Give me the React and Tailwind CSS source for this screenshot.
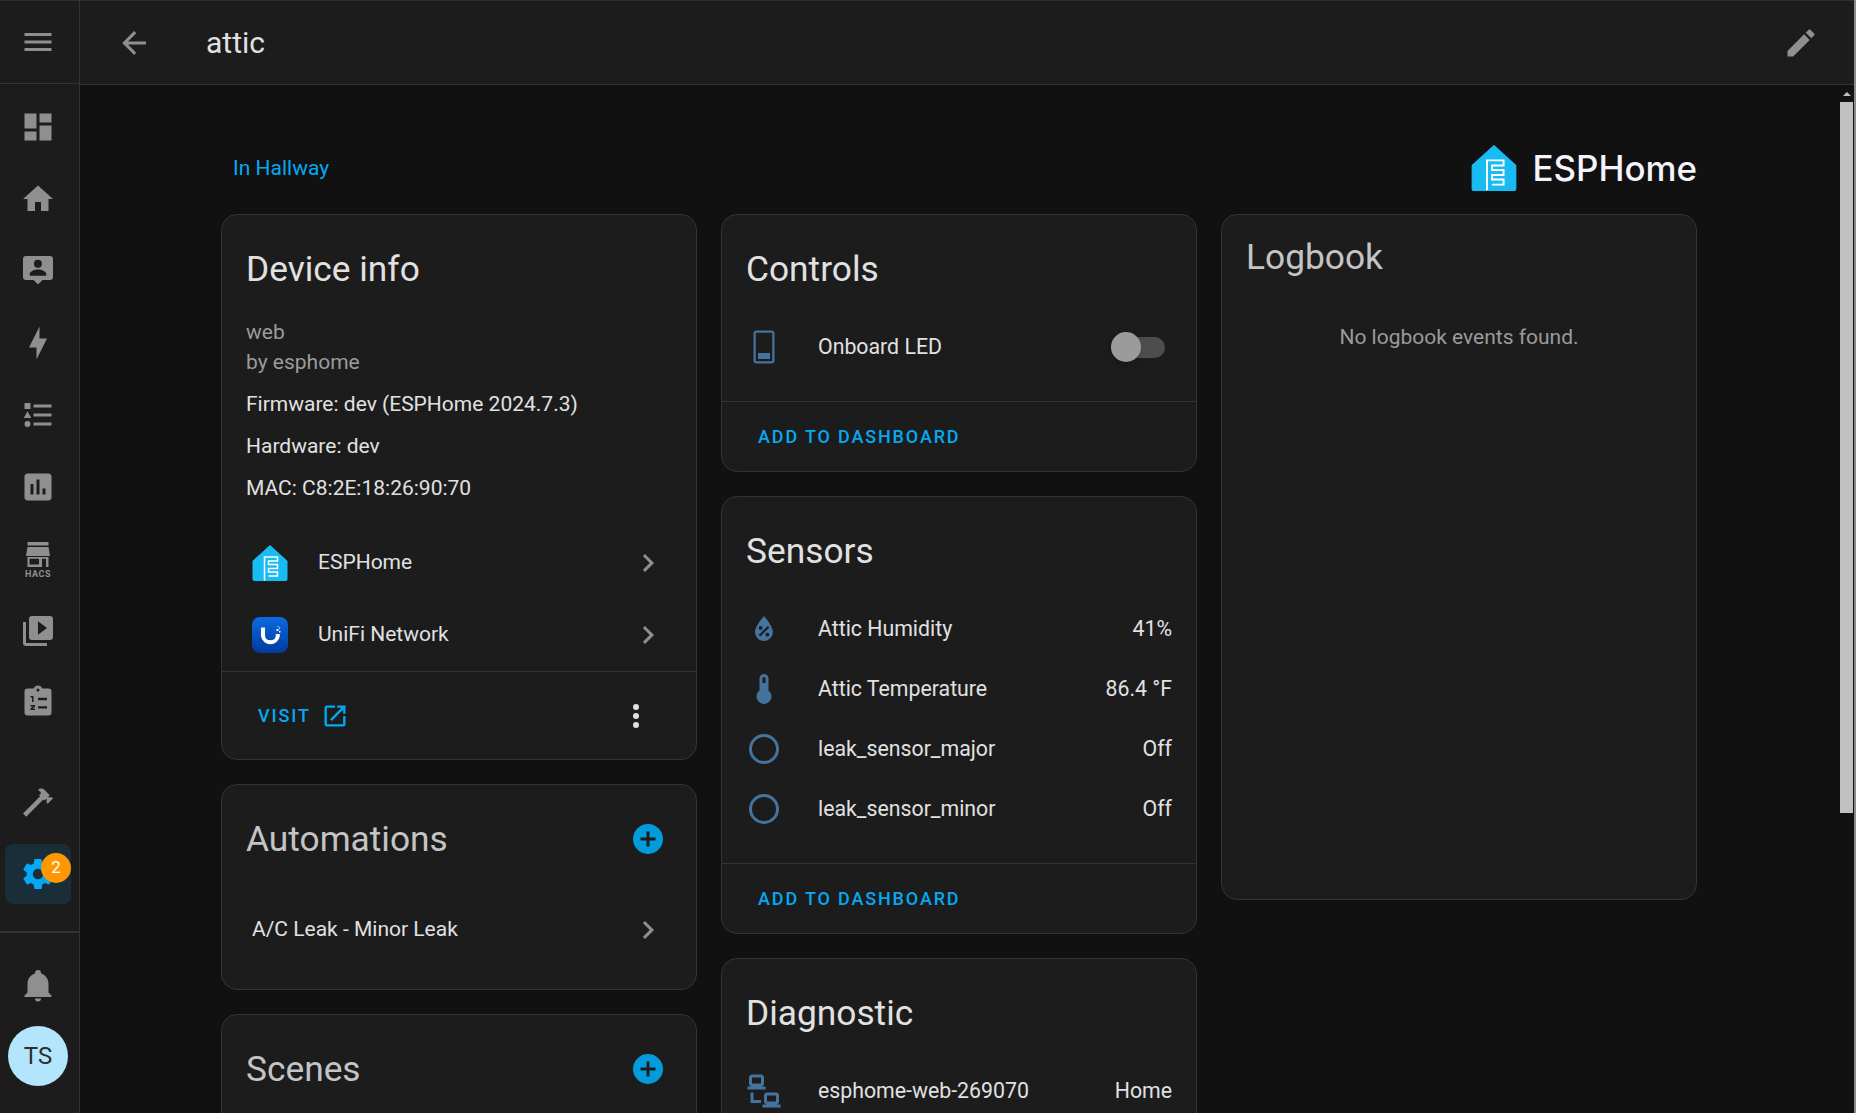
const P = {
  menu: "M3,6H21V8H3V6M3,11H21V13H3V11M3,16H21V18H3V16Z",
  back: "M20,11V13H8L13.5,18.5L12.08,19.92L4.16,12L12.08,4.08L13.5,5.5L8,11H20Z",
  pencil: "M20.71,7.04C21.1,6.65 21.1,6 20.71,5.63L18.37,3.29C18,2.9 17.35,2.9 16.96,3.29L15.12,5.12L18.87,8.87M3,17.25V21H6.75L17.81,9.93L14.06,6.18L3,17.25Z",
  dashboard: "M13,3V9H21V3M13,21H21V11H13M3,21H11V15H3M3,13H11V3H3V13Z",
  home: "M10,20V14H14V20H19V12H22L12,3L2,12H5V20H10Z",
  person: "M4,2H20A2,2 0 0,1 22,4V16A2,2 0 0,1 20,18H15L12,21L9,18H4A2,2 0 0,1 2,16V4A2,2 0 0,1 4,2M12,4.5A2.7,2.7 0 0,0 9.3,7.2A2.7,2.7 0 0,0 12,9.9A2.7,2.7 0 0,0 14.6,7.2A2.7,2.7 0 0,0 12,4.5M12,11C9.6,11 6.5,12.2 6.5,14V15.2H17.5V14C17.5,12.2 14.4,11 12,11Z",
  bolt: "M11 15H6L13 1V9H18L11 23V15Z",
  list: "M5,9.5L7.5,14H2.5L5,9.5M3,4H7V8H3V4M5,20A2,2 0 0,0 7,18A2,2 0 0,0 5,16A2,2 0 0,0 3,18A2,2 0 0,0 5,20M9,5V7H21V5H9M9,19H21V17H9V19M9,13H21V11H9V13Z",
  chart: "M19 3H5C3.9 3 3 3.9 3 5V19C3 20.1 3.9 21 5 21H19C20.1 21 21 20.1 21 19V5C21 3.9 20.1 3 19 3M9 17H7V10H9V17M13 17H11V7H13V17M17 17H15V13H17V17Z",
  media: "M4,6H2V20A2,2 0 0,0 4,22H18V20H4V6M20,2H8A2,2 0 0,0 6,4V16A2,2 0 0,0 8,18H20A2,2 0 0,0 22,16V4A2,2 0 0,0 20,2M12,14.5V5.5L18,10L12,14.5Z",
  todo: "M19,3H14.82C14.4,1.84 13.3,1 12,1C10.7,1 9.6,1.84 9.18,3H5A2,2 0 0,0 3,5V19A2,2 0 0,0 5,21H19A2,2 0 0,0 21,19V5A2,2 0 0,0 19,3M12,3A1,1 0 0,1 13,4A1,1 0 0,1 12,5A1,1 0 0,1 11,4A1,1 0 0,1 12,3M7,8H9V12H8V9H7V8M7,14H10V15.2L8.2,16.4H10V17.4H7V16.2L8.8,15H7V14M12,9.2H18V10.8H12V9.2M12,14.8H18V16.4H12V14.8Z",
  hammer: "M2 19.63L13.43 8.2L12.72 7.5L14.14 6.07L12 3.89C13.2 2.7 15.09 2.7 16.27 3.89L19.87 7.5L18.45 8.91H21.29L22 9.62L18.45 13.21L17.74 12.5V9.62L16.27 11.04L15.56 10.33L4.13 21.76L2 19.63Z",
  cog: "M12,15.5A3.5,3.5 0 0,1 8.5,12A3.5,3.5 0 0,1 12,8.5A3.5,3.5 0 0,1 15.5,12A3.5,3.5 0 0,1 12,15.5M19.43,12.97C19.47,12.65 19.5,12.33 19.5,12C19.5,11.67 19.47,11.34 19.43,11L21.54,9.37C21.73,9.22 21.78,8.95 21.66,8.73L19.66,5.27C19.54,5.05 19.27,4.96 19.05,5.05L16.56,6.05C16.04,5.66 15.5,5.32 14.87,5.07L14.5,2.42C14.46,2.18 14.25,2 14,2H10C9.75,2 9.54,2.18 9.5,2.42L9.13,5.07C8.5,5.32 7.96,5.66 7.44,6.05L4.95,5.05C4.73,4.96 4.46,5.05 4.34,5.27L2.34,8.73C2.21,8.95 2.27,9.22 2.46,9.37L4.57,11C4.53,11.34 4.5,11.67 4.5,12C4.5,12.33 4.53,12.65 4.57,12.97L2.46,14.63C2.27,14.78 2.21,15.05 2.34,15.27L4.34,18.73C4.46,18.95 4.73,19.03 4.95,18.95L7.44,17.94C7.96,18.34 8.5,18.68 9.13,18.93L9.5,21.58C9.54,21.82 9.75,22 10,22H14C14.25,22 14.46,21.82 14.5,21.58L14.87,18.93C15.5,18.67 16.04,18.34 16.56,17.94L19.05,18.95C19.27,19.03 19.54,18.95 19.66,18.73L21.66,15.27C21.78,15.05 21.73,14.78 21.54,14.63L19.43,12.97Z",
  bell: "M21,19V20H3V19L5,17V11C5,7.9 7.03,5.17 10,4.29C10,4.19 10,4.1 10,4A2,2 0 0,1 12,2A2,2 0 0,1 14,4C14,4.1 14,4.19 14,4.29C16.97,5.17 19,7.9 19,11V17L21,19M14,21A2,2 0 0,1 12,23A2,2 0 0,1 10,21",
  chevron: "M8.59,16.58L13.17,12L8.59,7.41L10,6L16,12L10,18L8.59,16.58Z",
  open: "M14,3V5H17.59L7.76,14.83L9.17,16.24L19,6.41V10H21V3M19,19H5V5H12V3H5C3.89,3 3,3.9 3,5V19A2,2 0 0,0 5,21H19A2,2 0 0,0 21,19V12H19V19Z",
  dots: "M12,16A2,2 0 0,1 14,18A2,2 0 0,1 12,20A2,2 0 0,1 10,18A2,2 0 0,1 12,16M12,10A2,2 0 0,1 14,12A2,2 0 0,1 12,14A2,2 0 0,1 10,12A2,2 0 0,1 12,10M12,4A2,2 0 0,1 14,6A2,2 0 0,1 12,8A2,2 0 0,1 10,6A2,2 0 0,1 12,4Z",
  plus: "M17,13H13V17H11V13H7V11H11V7H13V11H17M12,2A10,10 0 0,0 2,12A10,10 0 0,0 12,22A10,10 0 0,0 22,12A10,10 0 0,0 12,2Z",
  led: "M7,1H17A2,2 0 0,1 19,3V21A2,2 0 0,1 17,23H7A2,2 0 0,1 5,21V3A2,2 0 0,1 7,1M6.5,2.5V21.5H17.5V2.5H6.5M8,16H16V20H8V16Z",
  water: "M12,3.25C12,3.25 6,10 6,14C6,17.32 8.69,20 12,20A6,6 0 0,0 18,14C18,10 12,3.25 12,3.25M14.47,9.97L15.53,11.03L9.53,17.03L8.47,15.97M9.75,10A1.25,1.25 0 0,1 11,11.25A1.25,1.25 0 0,1 9.75,12.5A1.25,1.25 0 0,1 8.5,11.25A1.25,1.25 0 0,1 9.75,10M14.25,14.5A1.25,1.25 0 0,1 15.5,15.75A1.25,1.25 0 0,1 14.25,17A1.25,1.25 0 0,1 13,15.75A1.25,1.25 0 0,1 14.25,14.5Z",
  thermo: "M15 13V5A3 3 0 0 0 9 5V13A5 5 0 1 0 15 13M12 4A1 1 0 0 1 13 5V8H11V5A1 1 0 0 1 12 4Z",
  circle: "M12,20A8,8 0 0,1 4,12A8,8 0 0,1 12,4A8,8 0 0,1 20,12A8,8 0 0,1 12,20M12,2A10,10 0 0,0 2,12A10,10 0 0,0 12,22A10,10 0 0,0 22,12A10,10 0 0,0 12,2Z",
  lan: "M4 1C2.89 1 2 1.89 2 3V7C2 8.11 2.89 9 4 9H1V11H13V9H10C11.11 9 12 8.11 12 7V3C12 1.89 11.11 1 10 1H4M4 3H10V7H4V3M3 13V20H10V18H5V13H3M14 13C12.89 13 12 13.89 12 15V19C12 20.11 12.89 21 14 21H11V23H23V21H20C21.11 21 22 20.11 22 19V15C22 13.89 21.11 13 20 13H14M14 15H20V19H14V15Z",
};

function Icon({ d, className }) {
  return (
    <svg viewBox="0 0 24 24" className={className} fill="currentColor">
      <path d={d} fillRule="evenodd" />
    </svg>
  );
}

function EspLogo({ className }) {
  return (
    <svg viewBox="0 0 36 36" className={className}>
      <path d="M18 0.5L35 16V34.5A1 1 0 0 1 34 35.5H2A1 1 0 0 1 1 34.5V16Z" fill="#18bcf2" stroke="#18bcf2" strokeLinejoin="round" />
      <path d="M12.5 35.5V12H25.5V16H16.5V19.5H25.5V23.5H16.5V27H25.5V31H16.5" fill="none" stroke="#fff" strokeWidth="1.5" />
    </svg>
  );
}

function UnifiLogo({ className }) {
  return (
    <svg viewBox="0 0 36 36" className={className}>
      <defs>
        <linearGradient id="unifi" x1="0" y1="0" x2="0" y2="1">
          <stop offset="0" stopColor="#0a6be0" />
          <stop offset="1" stopColor="#003c9e" />
        </linearGradient>
      </defs>
      <rect width="36" height="36" rx="8" fill="url(#unifi)" />
      <path d="M11 10.5V19A7.5 7.5 0 0 0 25.8 19V17" fill="none" stroke="#fff" strokeWidth="4" />
      <path d="M24.5 12h2v2h-2zM27 14h1.5v1.5H27zM27 10.5h1.2v1.2H27zM25.5 9h1v1h-1z" fill="#fff" />
    </svg>
  );
}

function NavIcon({ d, className = "h-[72px]" }) {
  return (
    <div className={`flex items-center justify-center text-[#8f8f8f] ${className}`}>
      <Icon d={d} className="w-[36px] h-[36px]" />
    </div>
  );
}

function Sidebar() {
  return (
    <div className="w-[80px] shrink-0 bg-[#1c1c1c] border-r border-[#333333] pr-[3px] flex flex-col">
      <div className="h-[84px] shrink-0 mr-[-3px] pr-[3px] border-t border-t-[#2c3034] border-b border-b-[#333333] flex items-center justify-center text-[#8f8f8f]">
        <Icon d={P.menu} className="w-[36px] h-[36px]" />
      </div>
      <div className="pt-[7px] flex flex-col">
        <NavIcon d={P.dashboard} />
        <NavIcon d={P.home} />
        <NavIcon d={P.person} />
        <NavIcon d={P.bolt} />
        <NavIcon d={P.list} />
        <NavIcon d={P.chart} />
        <div className="h-[72px] pt-[2px] flex flex-col items-center justify-center text-[#8f8f8f]">
          <svg viewBox="0 0 24 25" className="w-[24px] h-[25px]" fill="currentColor">
            <path d="M1.5,0H22.5V3.5H1.5Z" />
            <path d="M1.5,5H22.5L24,14H0L1.5,5Z" />
            <path fillRule="evenodd" d="M1.5,15H22.5V25H1.5ZM3.5,16.8H13V22.5H3.5ZM16,16.8H20V25H16Z" />
          </svg>
          <span className="font-bold text-[9px] leading-[10px] mt-[2px] tracking-[0.6px]">HACS</span>
        </div>
        <NavIcon d={P.media} className="h-[71px]" />
        <NavIcon d={P.todo} className="h-[71px]" />
      </div>
      <div className="mt-[29px] flex flex-col">
        <NavIcon d={P.hammer} className="h-[71px]" />
        <div className="mx-[5px] mt-[7px] h-[60px] rounded-[8px] bg-[#1a2e3a] relative flex items-center justify-center text-[#03a9f4]">
          <Icon d={P.cog} className="w-[36px] h-[36px]" />
          <span className="absolute left-[36px] top-[9px] w-[30px] h-[30px] rounded-full bg-[#ff9800] text-white flex items-center justify-center text-[17px]">2</span>
        </div>
      </div>
      <div className="mt-[27px] mr-[-3px] h-[2px] bg-[#333333]"></div>
      <NavIcon d={P.bell} className="h-[86px] mt-[9px]" />
      <div className="ml-[8px] mt-[-2px] h-[60px] w-[60px] rounded-full bg-[#b3e5fc] flex items-center justify-center text-[24px] text-[#2e2e2e]">TS</div>
    </div>
  );
}

function Card({ children, className = "" }) {
  return <div className={`bg-[#1c1c1c] border border-[#333333] rounded-[16px] ${className}`}>{children}</div>;
}

function Title({ children, action, dim, className = "pt-[34px] pb-[22px]" }) {
  return (
    <div className={`flex items-center justify-between pl-[24px] pr-[30px] ${className}`}>
      <h2 className={`text-[35.3px] leading-[40px] font-normal ${dim ? "text-[#c4c4c4]" : "text-[#e1e1e1]"}`}>{children}</h2>
      {action}
    </div>
  );
}

function Plus() {
  return <Icon d={P.plus} className="w-[36px] h-[36px] text-[#049bdc]" />;
}

function EntityRow({ icon, name, value, className = "h-[60px]" }) {
  return (
    <div className={`flex items-center px-[24px] ${className}`}>
      <Icon d={icon} className="w-[36px] h-[36px] text-[#44739e] shrink-0" />
      <span className="ml-[36px] flex-1 text-[21.3px] text-[#e1e1e1]">{name}</span>
      {value}
    </div>
  );
}

function Value({ children }) {
  return <span className="text-[21.3px] text-[#e1e1e1]">{children}</span>;
}

function Action({ children }) {
  return <div className="h-[70px] px-[36px] flex items-center border-t border-[#333333] text-[#03a9f4] text-[18px] font-medium tracking-[1.85px]">{children}</div>;
}

function LinkRow({ logo, children }) {
  return (
    <div className="flex items-center h-[72px] pl-[30px] pr-[30px]">
      {logo}
      <span className="ml-[30px] flex-1 text-[21px] text-[#e1e1e1]">{children}</span>
      <Icon d={P.chevron} className="w-[36px] h-[36px] text-[#8f8f8f]" />
    </div>
  );
}

export default function App() {
  return (
    <div className="h-[1113px] w-[1856px] overflow-hidden flex bg-[#111111] font-['Roboto',sans-serif]">
      <Sidebar />
      <div className="flex-1 min-w-0 flex flex-col">
        <header className="h-[85px] shrink-0 bg-[#1c1c1c] border-t border-t-[#2c3034] border-b border-b-[#333333] flex items-center text-[#e1e1e1]">
          <Icon d={P.back} className="w-[36px] h-[36px] ml-[36px] text-[#8f8f8f]" />
          <span className="ml-[54px] text-[30px]">attic</span>
          <Icon d={P.pencil} className="w-[36px] h-[36px] ml-auto mr-[35px] text-[#8f8f8f]" />
        </header>
        <div className="flex-1 min-h-0 flex">
          <main className="flex-1 min-w-0 overflow-hidden">
            <div className="w-[1476px] ml-[141px]">
              <div className="h-[129px] flex items-end justify-between pb-[23px]">
                <span className="ml-[12px] mb-[7px] text-[21px] text-[#03a9f4]">In Hallway</span>
                <div className="flex items-center">
                  <EspLogo className="w-[46px] h-[46px]" />
                  <span className="ml-[15px] font-['Inter',sans-serif] font-medium text-[34.9px] leading-[46px] text-[#f4f4fa]">ESPHome</span>
                </div>
              </div>
              <div className="grid grid-cols-3 gap-[24px] items-start">
                <div className="flex flex-col gap-[24px]">
                  <Card className="h-[546px]">
                    <Title>Device info</Title>
                    <div className="px-[24px] text-[21px] pt-[6px]">
                      <p className="text-[#9b9b9b] leading-[30px]">web</p>
                      <p className="text-[#9b9b9b] leading-[30px]">by esphome</p>
                      <p className="text-[#e1e1e1] leading-[30px] mt-[12px]">Firmware: dev (ESPHome 2024.7.3)</p>
                      <p className="text-[#e1e1e1] leading-[30px] mt-[12px]">Hardware: dev</p>
                      <p className="text-[#e1e1e1] leading-[30px] mt-[12px]">MAC: C8:2E:18:26:90:70</p>
                    </div>
                    <div className="mt-[24px]">
                      <LinkRow logo={<EspLogo className="w-[36px] h-[36px]" />}>ESPHome</LinkRow>
                      <LinkRow logo={<UnifiLogo className="w-[36px] h-[36px]" />}>UniFi Network</LinkRow>
                    </div>
                    <div className="h-[88px] border-t border-[#333333] flex items-center pl-[36px] pr-[42px] text-[#03a9f4]">
                      <span className="text-[18px] font-medium tracking-[1.9px]">VISIT</span>
                      <Icon d={P.open} className="w-[28px] h-[28px] ml-[10px]" />
                      <Icon d={P.dots} className="w-[36px] h-[36px] ml-auto text-[#e1e1e1]" />
                    </div>
                  </Card>
                  <Card className="h-[206px]">
                    <Title dim action={<Plus />}>Automations</Title>
                    <div className="flex items-center pl-[30px] pr-[30px] h-[72px] mt-[13px]">
                      <span className="flex-1 text-[21px] text-[#e1e1e1]">A/C Leak - Minor Leak</span>
                      <Icon d={P.chevron} className="w-[36px] h-[36px] text-[#8f8f8f]" />
                    </div>
                  </Card>
                  <Card className="h-[206px]">
                    <Title dim action={<Plus />}>Scenes</Title>
                  </Card>
                </div>
                <div className="flex flex-col gap-[24px]">
                  <Card>
                    <Title>Controls</Title>
                    <EntityRow
                      icon={P.led}
                      name="Onboard LED"
                      className="h-[72px]"
                      value={
                        <div className="relative w-[54px] h-[21px] mr-[7px] rounded-full bg-[#4d4d4d]">
                          <div className="absolute left-0 top-[-5px] w-[30px] h-[30px] rounded-full bg-[#9b9b9b] shadow-md"></div>
                        </div>
                      }
                    />
                    <div className="h-[18px]"></div>
                    <Action>ADD TO DASHBOARD</Action>
                  </Card>
                  <Card>
                    <Title>Sensors</Title>
                    <div className="pt-[6px] pb-[24px]">
                      <EntityRow icon={P.water} name="Attic Humidity" value={<Value>41%</Value>} />
                      <EntityRow icon={P.thermo} name="Attic Temperature" value={<Value>86.4 °F</Value>} />
                      <EntityRow icon={P.circle} name="leak_sensor_major" value={<Value>Off</Value>} />
                      <EntityRow icon={P.circle} name="leak_sensor_minor" value={<Value>Off</Value>} />
                    </div>
                    <Action>ADD TO DASHBOARD</Action>
                  </Card>
                  <Card>
                    <Title>Diagnostic</Title>
                    <div className="pt-[6px] pb-[60px]">
                      <EntityRow icon={P.lan} name="esphome-web-269070" value={<Value>Home</Value>} />
                    </div>
                  </Card>
                </div>
                <Card className="h-[686px]">
                  <Title dim className="pt-[22px] pb-[23px]">Logbook</Title>
                  <p className="text-center text-[21px] text-[#9b9b9b] mt-[22px]">No logbook events found.</p>
                </Card>
              </div>
            </div>
          </main>
          <div className="w-[14px] shrink-0 flex flex-col">
            <div className="h-[17px] flex items-center justify-center">
              <div className="w-0 h-0 border-x-[4px] border-x-transparent border-b-[4px] border-b-[#c1c1c1]"></div>
            </div>
            <div className="w-[13px] h-[711px] bg-[#c1c1c1]"></div>
          </div>
        </div>
      </div>
      <div className="w-[2px] shrink-0 bg-[#8a8a8a]"></div>
    </div>
  );
}
